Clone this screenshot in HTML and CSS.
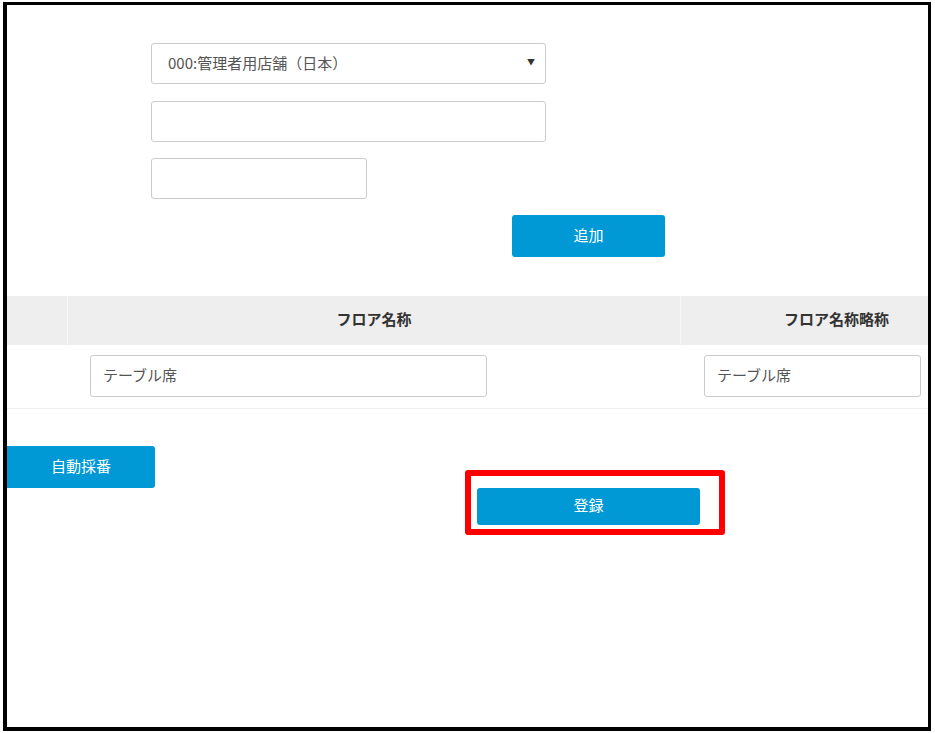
FILE: index.html
```html
<!DOCTYPE html>
<html lang="ja">
<head>
<meta charset="utf-8">
<title>フロア登録</title>
<link rel="stylesheet" href="styles.css">
</head>
<body>
<div class="frame">
  <div class="form">
    <div class="select">
      <span class="select-text">000:管理者用店舗（日本）</span>
      <span class="caret">▼</span>
    </div>
    <div class="input wide"></div>
    <div class="input short"></div>
    <div class="add-row">
      <button class="btn btn-add">追加</button>
    </div>
  </div>
  <div class="table">
    <div class="thead">
      <div class="cell c1"></div>
      <div class="cell c2">フロア名称</div>
      <div class="cell c3">フロア名称略称</div>
    </div>
    <div class="trow">
      <div class="cell c1"></div>
      <div class="cell c2"><div class="input field-name">テーブル席</div></div>
      <div class="cell c3"><div class="input field-short">テーブル席</div></div>
    </div>
  </div>
  <div class="actions">
    <button class="btn btn-auto">自動採番</button>
    <div class="highlight">
      <button class="btn btn-save">登録</button>
    </div>
  </div>
</div>
</body>
</html>
```
FILE: styles.css
```css
html, body {
  margin: 0;
  padding: 0;
  background: #ffffff;
}
body {
  font-family: "Noto Sans CJK JP", "Noto Sans", sans-serif;
  color: #555555;
}
.frame {
  box-sizing: border-box;
  margin: 2px 0 0 3px;
  width: 928px;
  height: 729px;
  border-style: solid;
  border-color: #000000;
  border-width: 3px 3px 4px 4px;
  overflow: hidden;
  background: #ffffff;
}
.form {
  padding: 38px 0 0 144px;
  display: flex;
  flex-direction: column;
  gap: 16px;
}
.select {
  box-sizing: border-box;
  width: 395px;
  height: 41px;
  border: 1px solid #cccccc;
  border-radius: 3px;
  display: flex;
  align-items: center;
  justify-content: space-between;
  padding: 0 10px 3px 16px;
  font-size: 15px;
  line-height: 1;
  color: #555555;
  margin-bottom: 1px;
}
.caret {
  font-size: 8px;
  color: #333333;
}
.input {
  box-sizing: border-box;
  height: 41px;
  border: 1px solid #cccccc;
  border-radius: 3px;
  background: #ffffff;
}
.wide { width: 395px; }
.short { width: 216px; }
.add-row {
  padding-left: 361px;
}
.btn {
  border: none;
  background: #0099d5;
  color: #ffffff;
  font-family: "Noto Sans CJK JP", "Noto Sans", sans-serif;
  font-size: 15px;
  line-height: 1;
  border-radius: 3px;
  padding: 0 0 4px 0;
  cursor: pointer;
}
.btn-add {
  width: 153px;
  height: 42px;
}
.table {
  margin-top: 39px;
  width: 1100px;
}
.thead, .trow {
  display: flex;
}
.thead {
  height: 49px;
  background: #eeeeee;
  font-weight: bold;
  font-size: 15px;
  line-height: 1;
  color: #333333;
}
.thead .cell {
  box-sizing: border-box;
  display: flex;
  align-items: center;
  justify-content: center;
  padding-bottom: 4px;
  border-left: 1px solid #f6f6f6;
}
.thead .c1 { border-left: none; }
.c1 { width: 60px; }
.c2 { width: 613px; }
.c3 { width: 312px; }
.trow {
  height: 63px;
  border-bottom: 1px solid #eeeeee;
}
.trow .cell {
  box-sizing: border-box;
  padding: 10px 0 0 23px;
}
.trow .c3 { padding-left: 24px; }
.field-name, .field-short {
  height: 42px;
  display: flex;
  align-items: center;
  padding: 0 0 3px 12px;
  font-size: 15px;
  line-height: 1;
  color: #555555;
}
.field-name { width: 397px; }
.field-short { width: 217px; }
.actions {
  display: flex;
  align-items: flex-start;
  margin-top: 37px;
}
.btn-auto {
  width: 148px;
  height: 42px;
  border-radius: 0 3px 3px 0;
}
.highlight {
  margin: 24px 0 0 310px;
  border: 6px solid #ff0000;
  border-radius: 3px;
  padding: 12px 19px 4px 6px;
}
.btn-save {
  display: block;
  width: 223px;
  height: 37px;
}
```
